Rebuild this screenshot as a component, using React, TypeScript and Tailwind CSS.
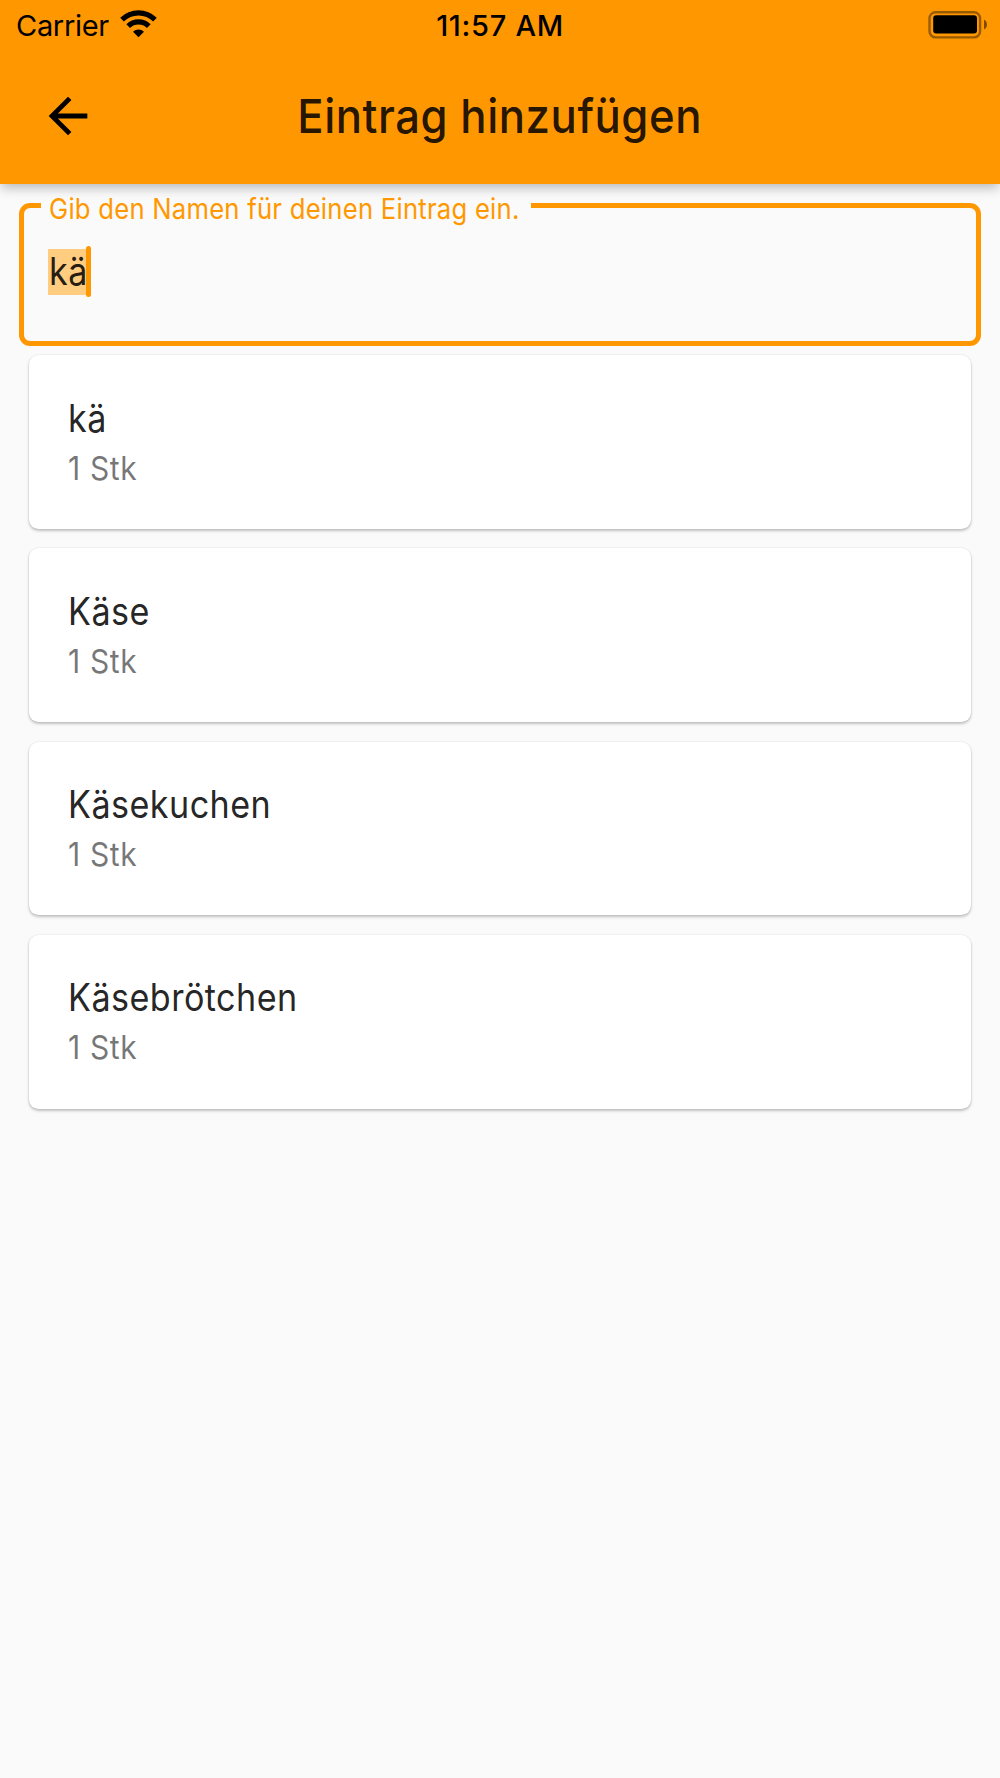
interface Entry {
  name: string;
  amount: string;
}

const ENTRIES: Entry[] = [
  { name: 'kä', amount: '1 Stk' },
  { name: 'Käse', amount: '1 Stk' },
  { name: 'Käsekuchen', amount: '1 Stk' },
  { name: 'Käsebrötchen', amount: '1 Stk' },
];

/* ── Icons ─────────────────────────────────────────────── */

function WifiIcon() {
  return (
    <svg className="w-[37px] h-[28px]" viewBox="0 0 37 28" fill="none">
      <path d="M2 9.6A23.5 23.5 0 0 1 35 9.6" stroke="#000" strokeWidth="5.2" />
      <path d="M8.2 16.2A14.6 14.6 0 0 1 28.8 16.2" stroke="#000" strokeWidth="5.2" />
      <path d="M18.5 27.2L13 21.8A8 8 0 0 1 24 21.8Z" fill="#000" />
    </svg>
  );
}

function BatteryIcon() {
  return (
    <svg className="w-[60px] h-[28px]" viewBox="0 0 60 28" fill="none">
      <rect x="1.5" y="1.2" width="50.6" height="25.2" rx="6.2" stroke="#000" strokeOpacity="0.4" strokeWidth="2.4" />
      <rect x="5.2" y="4.2" width="43.8" height="18.4" rx="3" fill="#000" />
      <path d="M56 8.5C60 10.5 60 16.5 56 18.5Z" fill="#000" fillOpacity="0.5" />
    </svg>
  );
}

function BackIcon() {
  return (
    <svg className="w-[58px] h-[58px]" viewBox="0 0 24 24" fill="#000">
      <path d="M20 11H7.83l5.59-5.59L12 4l-8 8 8 8 1.41-1.41L7.83 13H20v-2z" />
    </svg>
  );
}

/* ── Sections ──────────────────────────────────────────── */

function StatusBar() {
  return (
    <div className="grid grid-cols-3 h-12 text-black">
      <div className="flex items-start pl-4">
        <span className="mt-1 w-[93px] text-[29px] leading-[44px] tracking-[-0.3px]">Carrier</span>
        <span className="ml-[11px] mt-[10px]"><WifiIcon /></span>
      </div>
      <span className="mt-1 text-center text-[29px] leading-[44px] font-medium tracking-[0.7px]">11:57 AM</span>
      <div className="flex justify-end items-start pt-[11px] pr-[12px]">
        <BatteryIcon />
      </div>
    </div>
  );
}

function AppBar() {
  return (
    <header className="relative z-10 h-[183.5px] bg-[#ff9800] shadow-[0_5px_10px_-2px_rgba(0,0,0,0.2),0_6px_12px_rgba(0,0,0,0.08)]">
      <StatusBar />
      <div className="grid grid-cols-[150px_1fr_150px] items-center h-[135px]">
        <button className="ml-[39px] mt-[1px] w-[58px]" aria-label="Zurück">
          <BackIcon />
        </button>
        <h1 className="mt-[1px] text-center text-[47px] font-medium text-black/87 whitespace-nowrap">
          <span className="inline-block scale-x-[0.93] tracking-[0.58px]">Eintrag hinzufügen</span>
        </h1>
      </div>
    </header>
  );
}

function NameField() {
  return (
    <fieldset className="mt-[19.5px] mx-[19px] h-[142.5px] border-[5px] border-[#ff9800] rounded-[11px]">
      <legend className="ml-[17px] w-[490px] h-[5px] pl-2 text-[28.5px] leading-[11px] text-[#ff9800] whitespace-nowrap">
        <span className="inline-block origin-left scale-x-[0.9] tracking-[0.27px]">Gib den Namen für deinen Eintrag ein.</span>
      </legend>
      <div className="flex items-center ml-[24px] mt-[38px] h-[51px]">
        <span className="w-[38px] h-[46px] pl-px bg-[#ffcc80] text-[37.5px] leading-[46px] text-black/87 whitespace-nowrap">
          <span className="inline-block origin-left scale-x-[0.91] tracking-[0.6px]">kä</span>
        </span>
        <span className="w-[5px] h-[51px] rounded-full bg-[#ff9800]" />
      </div>
    </fieldset>
  );
}

function EntryCard({ name, amount }: Entry) {
  return (
    <li className="h-[173.9px] pl-[39px] pt-[39.6px] bg-white rounded-[9.6px] shadow-[0_2px_3px_rgba(0,0,0,0.22),0_0_2px_rgba(0,0,0,0.12)]">
      <div className="text-[37.5px] leading-[48px] text-black/87">
        <span className="inline-block origin-left scale-x-[0.91] tracking-[0.5px]">{name}</span>
      </div>
      <div className="mt-[3px] text-[33px] leading-[44px] text-black/54">
        <span className="inline-block origin-left scale-x-[0.91] tracking-[0.7px]">{amount}</span>
      </div>
    </li>
  );
}

export default function App() {
  return (
    <div className="w-[1000px] h-[1778px] overflow-hidden bg-[#fafafa] font-['Inter',sans-serif]">
      <AppBar />
      <main>
        <NameField />
        <ul className="flex flex-col gap-[19.3px] mx-[29px] mt-[9.7px]">
          {ENTRIES.map((entry) => (
            <EntryCard key={entry.name} {...entry} />
          ))}
        </ul>
      </main>
    </div>
  );
}
